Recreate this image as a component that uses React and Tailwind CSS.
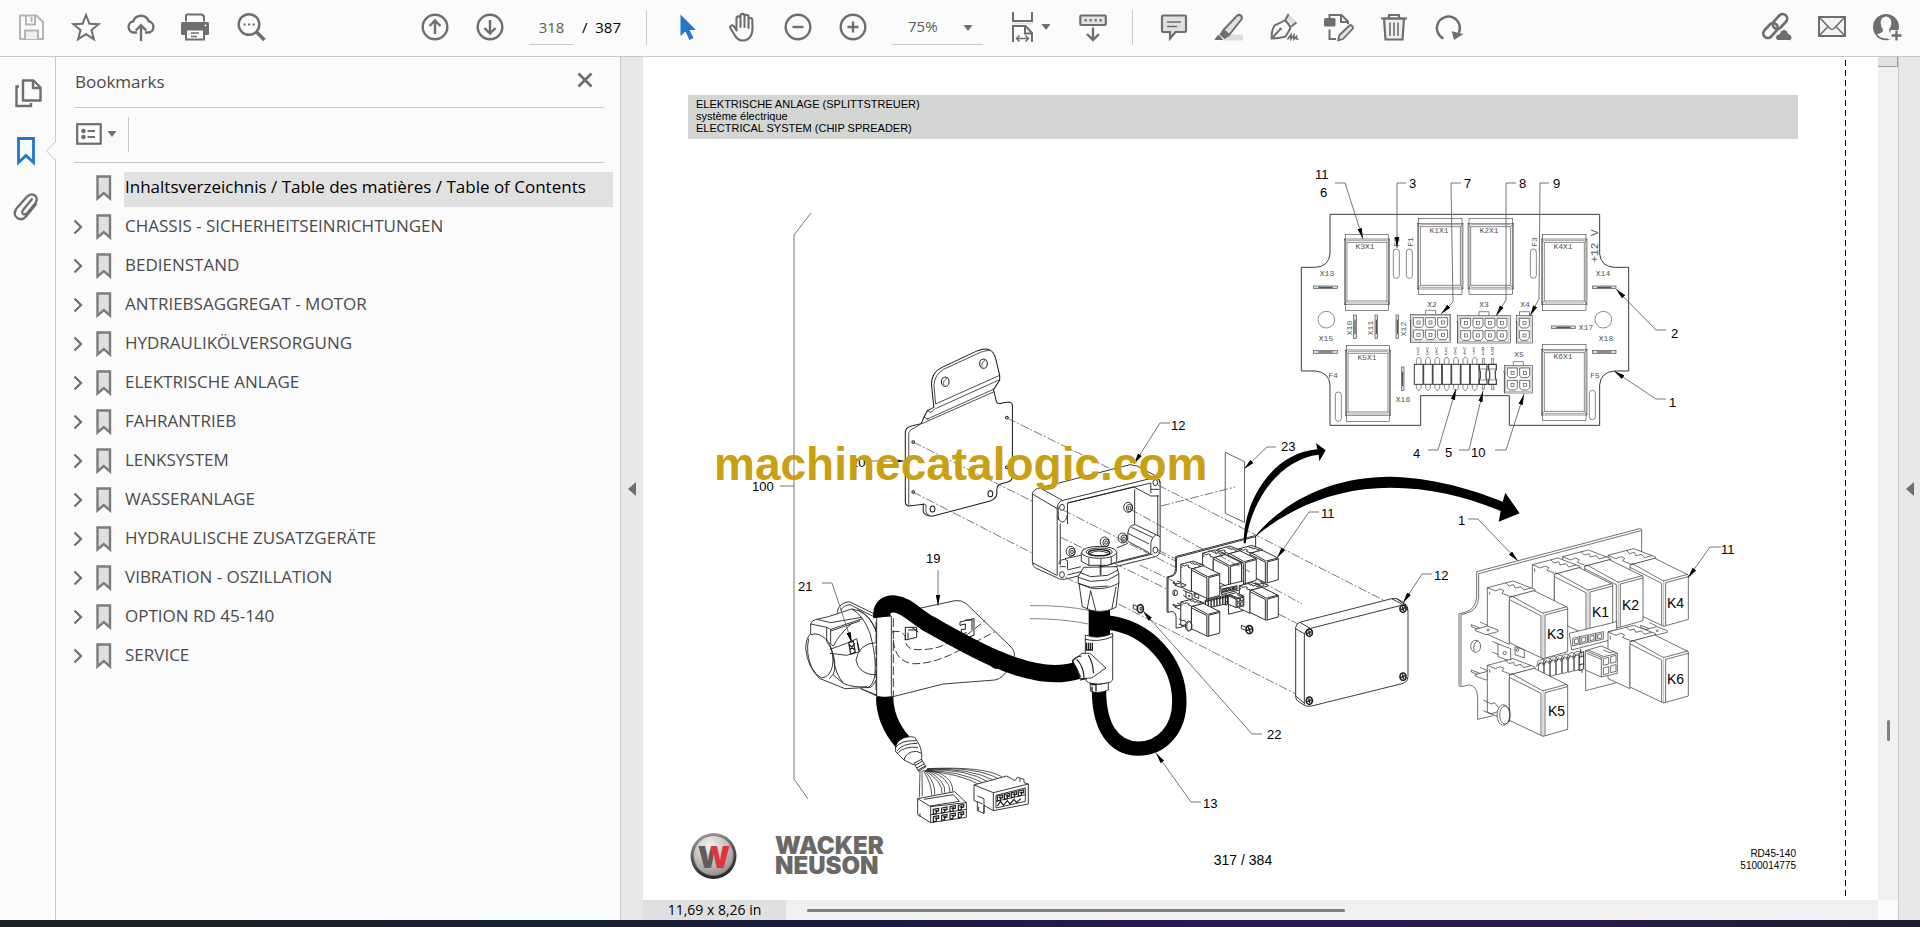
import { useState } from 'react';

const bookmarks = [
  'Inhaltsverzeichnis / Table des matières / Table of Contents',
  'CHASSIS - SICHERHEITSEINRICHTUNGEN',
  'BEDIENSTAND',
  'ANTRIEBSAGGREGAT - MOTOR',
  'HYDRAULIKÖLVERSORGUNG',
  'ELEKTRISCHE ANLAGE',
  'FAHRANTRIEB',
  'LENKSYSTEM',
  'WASSERANLAGE',
  'HYDRAULISCHE ZUSATZGERÄTE',
  'VIBRATION - OSZILLATION',
  'OPTION RD 45-140',
  'SERVICE',
];

/* ---------- icons ---------- */

const Icon = ({ children, className = 'text-[#6e6e6e]', sw = 2.4 }) => (
  <svg className={`w-[30px] h-[30px] shrink-0 ${className}`} viewBox="0 0 30 30" fill="none" stroke="currentColor" strokeWidth={sw}>
    {children}
  </svg>
);

const SaveIcon = () => (
  <Icon className="text-[#b4b4b4]" sw={2}>
    <path d="M4 3.5h16.500l6.500 6.500v17H4z" strokeLinejoin="round" />
    <path d="M10 3.500v9h9v-9M15.500 5v5" />
    <path d="M9 27v-8.500h13V27" fill="#f0f0f0" />
  </Icon>
);
const StarIcon = () => (
  <Icon sw={2}>
    <path d="M15 3l3.400 8.700 9.300.500-7.200 5.900 2.400 9.100L15 22.100l-7.900 5.100 2.400-9.100-7.200-5.900 9.300-.5z" />
  </Icon>
);
const CloudIcon = () => (
  <Icon>
    <path d="M11 20.500H7.800a5.600 5.600 0 0 1-.6-11.100 8.200 8.200 0 0 1 15.600 0 5.600 5.600 0 0 1-.6 11.100H19" />
    <path d="M15 29V13.500M9.800 18.500l5.200-5.200 5.200 5.200" />
  </Icon>
);
const PrintIcon = () => (
  <Icon sw={2}>
    <path d="M1.500 10h25q1.500 0 1.500 1.500V22q0 1-1 1H1q-1 0-1-1V11.500Q0 10 1.500 10z" fill="currentColor" stroke="none" />
    <path d="M5 9.500v-6q0-1 1-1h15l2 2v5" fill="#fbfbfb" />
    <path d="M5 17.500h18v10H5z" fill="#fbfbfb" />
    <path d="M10 21h8M10 24.500h6" strokeWidth="1.500" />
    <circle cx="24.500" cy="13.500" r="1" fill="#fbfbfb" stroke="none" />
  </Icon>
);
const SearchIcon = () => (
  <Icon>
    <circle cx="13" cy="12.500" r="10.300" />
    <path d="M20.500 20l8 8" strokeWidth="3.600" />
    <path d="M7.500 12.500h2.200M12 12.500h2.200M16.500 12.500h2.200" strokeWidth="2" />
  </Icon>
);
const UpIcon = () => (
  <Icon>
    <circle cx="15" cy="15" r="12.300" />
    <path d="M15 22V9M9.500 14L15 8.500l5.500 5.500" />
  </Icon>
);
const DownIcon = () => (
  <Icon>
    <circle cx="15" cy="15" r="12.300" />
    <path d="M15 8v13M9.500 16l5.500 5.500 5.500-5.500" />
  </Icon>
);
const ArrowIcon = () => (
  <Icon className="text-[#2277cc]">
    <path d="M7.500 2.500v21.500l5-4.500 4 8.500 4-2-4-8h6.500z" fill="currentColor" stroke="none" />
  </Icon>
);
const HandIcon = () => (
  <Icon sw={2.1}>
    <path
      d="M8.500 18.500V6.500c0-2.800 4-2.800 4 0v8.500V4c0-2.800 4-2.800 4 0v11V4.800c0-2.800 4-2.800 4 0V16V8c0-2.700 3.800-2.700 3.800 0 0 5 1.200 11-1.300 15.500-2.200 4.200-5.500 5-8.500 5-4.500 0-6.500-2.500-8.500-6.500L2.500 16.500c-1.300-2.700 2-4.300 3.700-1.800l2.800 4.500"
      strokeLinejoin="round"
    />
  </Icon>
);
const MinusIcon = () => (
  <Icon>
    <circle cx="15" cy="15" r="12.300" />
    <path d="M9.500 15h11" />
  </Icon>
);
const PlusIcon = () => (
  <Icon>
    <circle cx="15" cy="15" r="12.300" />
    <path d="M9.500 15h11M15 9.500v11" />
  </Icon>
);
const FitIcon = () => (
  <Icon sw={2}>
    <path d="M6 0v9h19V0" />
    <path d="M6 11.500h20" stroke="#dddddd" strokeWidth="1.500" />
    <path d="M6 30V14h12.500l6.500 7v9M18 14v7.500h7" />
    <path d="M9.500 26.500h12M12.500 23.500l-3 3 3 3M18.500 23.500l3 3-3 3" strokeWidth="1.500" />
  </Icon>
);
const KeyboardIcon = () => (
  <Icon>
    <rect x="2.300" y="3.500" width="25.500" height="9.500" rx="1" fill="#e4e4e4" strokeWidth="2.200" />
    <path d="M6.500 8.300h2.200M11.500 8.300h2.200M16.500 8.300h2.200M21.500 8.300h2.200" />
    <path d="M15 15.500v12M9 22l6 6 6-6" />
  </Icon>
);
const CommentIcon = () => (
  <Icon sw={2.2}>
    <path d="M4 3.500h22q1 0 1 1v14.500q0 1-1 1H16.500L11 26.500V20H4q-1 0-1-1V4.500q0-1 1-1z" fill="#e0e0e0" />
    <path d="M8 10h14M8 14.500h10" strokeWidth="1.500" />
  </Icon>
);
const HighlightIcon = () => (
  <Icon sw={2}>
    <path d="M13 22.500h16v6H8z" fill="#dedede" stroke="none" />
    <path d="M9.500 18L23 3.800q2.200-1.800 4 0t0 4.200L15 23z" fill="#e0e0e0" />
    <path d="M8.500 18.500l6 5.500-4 2.500-4.500-4zM4.500 23l4 4.500H1z" fill="currentColor" strokeWidth="1" />
  </Icon>
);
const SignIcon = () => (
  <Icon sw={2}>
    <path d="M17.500 6l2.500-3.500 8 7.500-4 3.500z" fill="#dedede" stroke="none" />
    <path d="M16.500 8l3-6M22 14.500l5.500-4" />
    <path d="M2.500 26.500q0-8 3-13Q11 11 15.500 8.500q4 2 6 7.500-2 4-5 8.500-6 2-14 2zM2.500 26.500l8-8.500" strokeLinejoin="round" />
    <circle cx="11.500" cy="17" r="1.500" fill="currentColor" stroke="none" />
    <path d="M18.500 27.500l3.500-5v4.500l3-4v4l2.500-2.500v2.500h2" strokeWidth="1.600" />
  </Icon>
);
const EditIcon = () => (
  <Icon sw={2}>
    <rect x="0" y="6" width="11.500" height="8.500" rx="1.500" fill="currentColor" stroke="none" />
    <path d="M5.500 6V3h12l6.500 6.500V12M17 3v7h7M5.500 17.500v9.500H12" />
    <path d="M14 28.500l1.500-5.500L26 13q3 .500 3 3.500L19 27z" fill="#e0e0e0" strokeLinejoin="round" strokeWidth="1.800" />
  </Icon>
);
const TrashIcon = () => (
  <Icon sw={2.2}>
    <path d="M5 6.500h20L23.500 27.500h-17z" fill="#f0f0f0" />
    <path d="M2 6.500h26M10 6V3h10v3" />
    <path d="M11 10.500v13.500M15 10.500v13.500M19 10.500v13.500" strokeWidth="1.600" />
  </Icon>
);
const RotateIcon = () => (
  <Icon>
    <path d="M9.500 26.500A11.500 11.500 0 1 1 24.800 21" />
    <path d="M17.700 19.200L29.500 22 20 28z" fill="currentColor" stroke="none" />
  </Icon>
);
const LinkIcon = () => (
  <Icon sw={2.7}>
    <rect x="-8.500" y="-4.500" width="17" height="9" rx="4.500" transform="translate(18 9.500) rotate(-48)" />
    <rect x="-8.500" y="-4.500" width="17" height="9" rx="4.500" transform="translate(8.500 18.500) rotate(-48)" />
    <path d="M16 28.500q-3-.5-2.500-3.500t3.800-3q1.500-5 5-4.500t4.200 4.200q3.500.8 3.500 4t-2.500 2.800z" fill="currentColor" stroke="#fbfbfb" strokeWidth="1" />
  </Icon>
);
const MailIcon = () => (
  <Icon sw={2}>
    <rect x="2" y="5" width="26" height="19" fill="#f4f4f4" />
    <path d="M2.500 5.500l10.500 11q2 1.600 4 0l10.500-11M2.500 23.500l8.500-9M27.500 23.500l-8.500-9" strokeWidth="1.600" />
  </Icon>
);
const UserIcon = () => (
  <Icon sw={2.4}>
    <circle cx="14" cy="15" r="13" fill="currentColor" stroke="none" />
    <path d="M14 4.500q5.500.5 5.300 7-.3 4-2.300 6l.5 2.500 4.500 3-2 4h-12l-3-4.500 5.500-2.500.500-2.500q-2-2-2.300-6Q8.500 5 14 4.500z" fill="#fbfbfb" stroke="none" />
    <path d="M5 23.500q4 4.500 11 3.800" strokeWidth="1.800" />
    <path d="M18.500 18H30v12H18.500z" fill="#fbfbfb" stroke="none" />
    <path d="M24.500 18.500v10M19.500 23.500h10" />
  </Icon>
);
const PagesIcon = () => (
  <Icon>
    <path d="M6 8.500H3.500v19.500h14.500v-3" />
    <path d="M10 2.500h10.500l7 7v13H10z" strokeLinejoin="round" />
    <path d="M20 3v7h7" />
  </Icon>
);
const ClipIcon = () => (
  <Icon sw={2.3}>
    <path d="M21.500 6.500l-9.500 11.500q-1.800 3 .5 4.200 2 .8 3.800-1.300l8.200-10q3-4.800-.8-7.600-4-2.500-7.800 1.500L5.500 16.500q-4 6 .8 9.500 4.800 3 8.700-1.500l10.500-13" />
  </Icon>
);
const MarkIcon = () => (
  <svg className="w-[16px] h-[26px] shrink-0" viewBox="0 0 16 26">
    <path d="M1.500 1.500h12.500v22L7.800 18 1.500 23.500z" fill="#e0e0e0" stroke="#7c7c7c" strokeWidth="2.400" />
  </svg>
);
const Caret = ({ className = '' }) => (
  <svg className={`w-[10px] h-[6px] ${className}`} viewBox="0 0 10 6">
    <path d="M.5 0h9L5 6z" fill="#6e6e6e" />
  </svg>
);

const ToolButton = ({ label, children }) => (
  <button type="button" aria-label={label} className="w-[55px] h-10 flex items-center justify-center shrink-0 cursor-pointer">
    {children}
  </button>
);
const Divider = () => <div className="w-px h-[35px] bg-[#c8c8c8] shrink-0" />;

/* ---------- technical drawing ---------- */

const Note = ({ x, y, size = 13, children }) => (
  <text x={x} y={y} fontSize={size} fill="#000" fontFamily="Liberation Sans, sans-serif">{children}</text>
);
const Label = ({ x, y, size = 8, turn, children }) => (
  <text
    x={x}
    y={y}
    fontSize={size}
    fill="#555"
    textAnchor="middle"
    fontFamily="Liberation Mono, monospace"
    transform={turn ? `rotate(-90 ${x} ${y})` : undefined}
  >
    {children}
  </text>
);

// callouts: text, x, y (baseline)
const notes = [
  ['11', 1315, 179], ['6', 1320, 197], ['3', 1409, 188], ['7', 1464, 188], ['8', 1519, 188], ['9', 1553, 188],
  ['2', 1671, 338], ['1', 1669, 407], ['4', 1413, 458], ['5', 1445, 457], ['10', 1471, 457],
  ['23', 1281, 451], ['11', 1321, 518], ['12', 1434, 580], ['1', 1458, 525], ['11', 1721, 554],
  ['12', 1171, 430], ['19', 926, 563], ['21', 798, 591], ['20', 851, 467], ['100', 752, 491],
  ['22', 1267, 739], ['13', 1203, 808],
];

const leaders = [
  '1335,183 1345,183 1363,239', '1406,183 1397,183 1397,248', '1461,183 1451,183 1453,302 1441,314',
  '1516,183 1506,183 1506,300 1496,316', '1549,183 1540,183 1539,299 1530,316', '1666,330 1656,330 1616,289',
  '1666,399 1656,399 1614,371', '1428,450 1438,450 1456,389', '1459,450 1469,450 1483,391',
  '1495,450 1506,450 1524,394', '1319,512 1309,512 1277,558', '1432,574 1422,574 1403,603',
  '1468,519 1478,519 1518,561', '1721,547 1710,547 1688,578', '1170,423 1160,423 1134,464',
  '1276,447 1267,447 1244,469', '938,570 938,606', '822,583 832,583 852,643', '871,461 904,461',
  '1262,734 1252,734 1143,611', '1201,802 1191,802 1156,753',
];

const boardLabels = [
  ['K3X1', 255, 296], ['K1X1', 478, 249], ['K2X1', 627, 249], ['K4X1', 848, 296], ['K5X1', 260, 629], ['K6X1', 848, 627],
  ['X13', 141, 379], ['X14', 969, 379], ['X15', 137, 573], ['X18', 978, 573], ['X2', 455, 470], ['X3', 613, 470],
  ['X4', 735, 470], ['X5', 718, 620], ['F4', 158, 684], ['F5', 945, 684], ['X16', 370, 756], ['X17', 918, 540],
  ['X10', 215, 533, true], ['X11', 279, 533, true], ['X12', 378, 536, true], ['F2', 358, 275, true],
  ['F1', 400, 275, true], ['F3', 770, 275, true],
];

const PlanRelay = ({ x, y }) => (
  <g>
    <rect x={x} y={y} width="130" height="228" />
    <rect x={x - 3} y={y + 14} width="136" height="197" strokeWidth="1.600" />
    <path d={`M${x + 5} ${y + 24}h120v176h-120zM${x - 3} ${y + 14}l8 10M${x + 133} ${y + 14}l-8 10M${x - 3} ${y + 211}l8-11M${x + 133} ${y + 211}l-8-11`} />
    <path d={`M${x + 5} ${y + 18}h120M${x + 5} ${y + 206}h120`} strokeWidth="1.400" />
  </g>
);

const Plug = ({ x, y, w, h, xs, ys }) => (
  <g>
    <rect x={x} y={y} width={w} height={h} />
    <rect x={x + 4} y={y + 4} width={w - 8} height={h - 8} strokeWidth="1" />
    <path d={`M${x + w / 2 - 15} ${y}v-12h30v12M${x - 4} ${y + 18}h4v${h - 18}`} />
    {xs.map((cx) =>
      ys.map((cy) => (
        <g key={`${cx}-${cy}`}>
          <path d={`M${cx - 15} ${cy - 14}h30v22l-6 7h-18l-6-7z`} strokeWidth="2.200" />
          <rect x={cx - 4} y={cy - 4} width="9" height="9" />
        </g>
      ))
    )}
  </g>
);

const BoardPlan = () => (
  <g transform="translate(1280 150) scale(.33333)" fill="none" stroke="#3a3a3a" strokeWidth="1.800">
    <path
      d="M150 193H959V312Q963 350 1003 352H1046V663H1003Q961 667 959 705V826H688V737H422V826H150V705Q148 667 106 663H64V352H106Q146 350 150 312Z"
      strokeWidth="3"
    />
    <PlanRelay x={196} y={253} />
    <PlanRelay x={416} y={206} />
    <PlanRelay x={567} y={206} />
    <PlanRelay x={788} y={253} />
    <PlanRelay x={199} y={586} />
    <PlanRelay x={788} y={584} />
    {[[340, 297], [379, 297], [751, 297], [166, 726], [928, 721]].map(([x, y]) => (
      <rect key={`${x}-${y}`} x={x} y={y} width="18" height="88" rx="9" />
    ))}
    <circle cx="139" cy="509" r="25" />
    <circle cx="970" cy="509" r="25" />
    {[[101, 408], [937, 408], [101, 602], [937, 602], [815, 528]].map(([x, y]) => (
      <g key={`${x}-${y}`}>
        <rect x={x} y={y} width="71" height="8" fill="#ddd" />
        <path d={`M${x + 14} ${y + 4}h43`} strokeWidth="3" />
      </g>
    ))}
    {[[221, 495], [285, 495], [348, 495], [364, 651]].map(([x, y]) => (
      <g key={`${x}-${y}`}>
        <rect x={x} y={y} width="8" height="71" fill="#ddd" />
        <path d={`M${x + 4} ${y + 14}v43`} strokeWidth="3" />
      </g>
    ))}
    <Plug x={392} y={493} w={120} h={84} xs={[415, 451, 488]} ys={[517, 554]} />
    <Plug x={533} y={497} w={158} h={82} xs={[557, 594, 630, 666]} ys={[519, 556]} />
    <Plug x={710} y={497} w={47} h={82} xs={[733]} ys={[519, 556]} />
    <Plug x={673} y={647} w={84} h={82} xs={[697, 734]} ys={[668, 705]} />
    {[0, 1, 2, 3, 4, 5, 6].map((i) => (
      <g key={i}>
        <rect x={403 + i * 28} y="643" width="26" height="60" strokeWidth="3" />
        <path d={`M${409 + i * 28} 643v-15l5-6h4l5 6v15M${409 + i * 28} 703v12l5 6h4l5-6v-12`} />
      </g>
    ))}
    {[598, 626].map((x) => (
      <g key={x}>
        <path d={`M${x} 643h23v16l-3 5v20l3 5v14h-23v-14l3-5v-20l-3-5z`} strokeWidth="3.500" />
        <path d={`M${x} 657h23M${x} 690h23M${x + 9} 643v-18h6v18M${x + 9} 703v16h6v-16`} />
      </g>
    ))}
  </g>
);

// x, y: top of the front vertical edge of the relay cap
const IsoRelay = ({ x, y }) => (
  <g transform={`translate(${x} ${y})`} fill="#fff" strokeLinejoin="round">
    <path d="M-167-82L-90-102-24-77V-60L-101-40V88L-167 58Z" />
    <path d="M-167-82l24 10 14-6 12 5-6 8 22 8M-112-97l10 10 14-4 4 10 18-4 8 10 22-6M-160-70v10M-101-53l77-20" fill="none" />
    <path d="M-101-53L-27-73 74-23V110L0 131-101 83Z" />
    <path d="M-101-53Q-100-58-92-56L-4-7Q0-5 6-7L72-25M-6 2V128M6 0V128M-101-46L-6 2M6 0L74-18" fill="none" />
    <path d="M0-7V131" fill="none" strokeWidth="1" />
  </g>
);

const Spade = ({ x, y }) => (
  <g transform={`translate(${x} ${y})`} fill="#fff">
    <path d="M-48-14l30 12M-22-22l22 10M-48-14v6l24 10" />
    <path d="M-36 0L0-10 32 2v5L-4 16-36 4z" />
    <circle cx="2" cy="2" r="3" />
  </g>
);

const IsoBoard = ({ transform, strokeWidth }) => (
  <g transform={transform} fill="none" stroke="#2a2a2a" strokeWidth={strokeWidth}>
    <path d="M650 455L1139 326 1145 328V600L1070 790 977 812 700 887 653 898V830Q650 792 618 795L597 797V581L618 577Q650 568 650 530Z" fill="#fff" stroke="none" />
    <path d="M1145 400V328L1139 326 650 455V530Q648 568 615 577L597 581V797L602 800 628 795Q650 796 653 830V898L700 887M656 461L1143 332M656 461V533Q654 572 618 580L603 584V797M977 745V812L1070 788" />
    <ellipse cx="647" cy="679" rx="15" ry="18" />
    <path d="M654 662q-16 6-12 32" />
    <circle cx="856" cy="545" r="25" />
    <IsoRelay x={1211} y={488} />
    <IsoRelay x={1075} y={492} />
    <IsoRelay x={984} y={516} />
    <path d="M928 640L1070 605V655L935 690Z" fill="#fff" />
    {[938, 960, 985, 1008, 1046].map((x, i) => (
      <path key={x} d={`M${x} ${655 - i * 5}l22-5v22l-22 6zM${x + 5} ${659 - i * 5}l12-3v13l-12 3z`} fill="#fff" />
    ))}
    <Spade x={1190} y={630} />
    <IsoRelay x={1211} y={718} />
    <IsoRelay x={849} y={585} />
    <Spade x={682} y={628} />
    <Spade x={682} y={764} />
    <path d="M697 664l18 8M697 696l18 8M714 672l38 14v38l-38-14zM765 680l28 10v24l-28-10z" fill="#fff" />
    <circle cx="734" cy="699" r="5" />
    <circle cx="772" cy="690" r="4" />
    {[0, 1, 2, 3, 4, 5, 6].map((i) => (
      <g key={i}>
        <path d={`M${835 + i * 18} ${732 - i * 4}l16-4v44l-16 5z`} fill="#fff" />
        <path d={`M${830 + i * 18} ${740 - i * 4}q2-20 14-22t14 14M${836 + i * 18} ${738 - i * 4}q2-12 8-14`} />
      </g>
    ))}
    <path d="M957 700l14-5v52l-14 5zM957 712l14-4M957 735l14-4M962 697v-10M966 750v8" strokeWidth={strokeWidth + 1} />
    <path d="M976 692L1024 678 1072 700V760L1024 771 976 750Z" fill="#fff" />
    <path d="M976 692l48 20 48-12M1024 712v59M984 690l44 18M1030 716l16-4v20l-16 4zM1052 710l16-4v20l-16 4zM1030 744l16-4v20l-16 4zM1052 738l16-4v20l-16 4zM980 700l44 18M1030 690l20 8 14-4" />
    <IsoRelay x={849} y={818} />
    <path d="M670 840l24 12 10-4 12 16M670 872l22 10 24-8" />
    <ellipse cx="730" cy="885" rx="19" ry="31" fill="#fff" />
    <ellipse cx="735" cy="885" rx="16" ry="27" />
  </g>
);

const Bracket = () => (
  <g transform="translate(760 320) scale(.34436 .33333)" fill="none" stroke="#1c1c1c" strokeWidth="3">
    <path d="M505 262L498 195Q497 158 527 143L632 92Q675 74 685 118L696 166V180L678 209 687 246Q690 252 700 250L722 246Q734 246 733 262V470Q732 482 722 485L698 492Q686 498 688 515 690 535 668 543L500 589Q478 588 474 575V553L432 558Q422 556 422 546V335Q424 322 440 318L468 311 476 292 486 272Z" />
    <path d="M510 252L696 166M512 265L694 180M484 298L680 207M470 311L680 215M510 252L505 195Q508 162 533 148L640 97Q660 90 668 92M432 556V340Q434 328 448 324L468 311M476 290l14 10M486 272l10 5 14-12M482 575v-20l-8-4M482 575q2 10 12 12" strokeWidth="2.300" />
    <ellipse cx="538" cy="185" rx="11" ry="14" />
    <path d="M544 174q-14 6-10 22M655 120q-14 6-10 22" strokeWidth="2" />
    <ellipse cx="649" cy="131" rx="11" ry="14" />
    <circle cx="445" cy="366" r="4" />
    <circle cx="445" cy="516" r="4" />
    <circle cx="717" cy="293" r="4" />
    <circle cx="717" cy="442" r="4" />
    <ellipse cx="501" cy="567" rx="7" ry="9" />
    <ellipse cx="669" cy="521" rx="7" ry="9" />
    <path d="M1351 397L1407 425V607L1351 580Z" strokeWidth="2" />
  </g>
);

const Housing = () => (
  <g transform="translate(760 320) scale(.34436 .33333)" fill="none" stroke="#1c1c1c" strokeWidth="2.600">
    <path d="M791 520Q795 507 815 503L1075 434 1095 438 1150 468Q1163 476 1162 495V690Q1162 705 1148 710L885 778Q868 780 860 772L800 744Q791 739 791 725Z" fill="#fff" />
    <path d="M815 505L878 541M791 522L863 566M791 728L862 766M863 766V562Q865 545 880 541L1140 474Q1160 472 1162 490M872 610V735M893 612V549L1084 501" />
    <path d="M893 549L1135 489 M1084 500L1135 528H1158M1088 508V612M1135 489V520M1155 525V648M866 590Q868 605 878 606 890 604 892 585M866 560V600M1135 508H1160" />
    <path d="M868 733Q870 718 885 718L893 722V748M870 740H888M893 765L1140 702M893 750L932 740M885 716L932 706M1036 684L1068 670" />
    <path d="M1068 662V640Q1072 612 1090 614L1150 644M1078 622L1140 652M1068 640L1130 672M1068 664L1130 698M1135 700V668Q1138 650 1150 644L1162 650M1040 725L1135 700" />
    {[[877, 562], [1148, 488], [877, 764], [1148, 690]].map(([x, y]) => (
      <ellipse key={`${x}-${y}`} cx={x} cy={y} rx="7" ry="9" />
    ))}
    {[[1069, 562], [1053, 654], [1001, 666], [902, 694]].map(([x, y]) => (
      <g key={`${x}-${y}`}>
        <ellipse cx={x} cy={y} rx="13" ry="15" />
        <ellipse cx={x + 4} cy={y + 2} rx="9" ry="11" />
        <ellipse cx={x + 4} cy={y + 2} rx="4" ry="5" />
      </g>
    ))}
  </g>
);

const Gland = () => (
  <g transform="translate(760 320) scale(.34436 .33333)" fill="#fff" stroke="#1c1c1c" strokeWidth="2.600">
    <path d="M926 788L936 860Q985 888 1034 862L1042 788Z" />
    <path d="M960 812L950 868M960 812L975 872M1034 800L1022 866" fill="none" />
    <path d="M940 742L1036 740 1042 762V790Q1000 812 960 804L924 790V770Z" />
    <path d="M924 772L960 784 1010 780 1042 762M930 758L960 770 1010 766 1040 750M924 790L960 802 1010 798M988 735V765" fill="none" />
    <path d="M933 697V724L955 736H1008L1036 726V697Z" />
    <path d="M955 714V736M990 716V765M1020 708V732" fill="none" />
    <ellipse cx="985" cy="697" rx="51" ry="18" />
    <ellipse cx="985" cy="696" rx="38" ry="12" />
    <ellipse cx="985" cy="698" rx="31" ry="9" strokeWidth="4" />
    <path d="M958 700q26-14 54 0" fill="none" />
  </g>
);

const Cover = () => (
  <g transform="translate(1260 420) scale(.33333)" fill="none" stroke="#1c1c1c" strokeWidth="2.600">
    <path d="M107 622Q110 609 122 606L395 536Q410 533 422 542L434 550Q445 558 444 575V770Q443 786 430 790L155 858Q142 861 133 856L112 842Q107 838 107 828Z" fill="#fff" />
    <path d="M133 854V648Q134 629 152 625L420 557Q440 553 444 572M107 626L134 642M120 607L150 625M395 536L425 552M107 828L134 850M410 536L440 558" />
    {[[148, 638], [429, 566], [148, 842], [429, 770]].map(([x, y]) => (
      <g key={`${x}-${y}`}>
        <ellipse cx={x} cy={y} rx="9" ry="11" strokeWidth="5" />
        <path d={`M${x - 6} ${y + 3}l12-6M${x - 2} ${y - 7}l4 14`} strokeWidth="4" />
      </g>
    ))}
  </g>
);

const Pins = ({ x, y, n, dx, dy }) =>
  Array.from({ length: n }, (_, i) => (
    <path key={i} d={`M${x + i * dx} ${y + i * dy}l16-3v8l-7 2v6l-9 2zM${x + 4 + i * dx} ${y + 5 + i * dy}l8-2`} strokeWidth="3.500" />
  ));

const Harness = () => (
  <g transform="translate(780 540) scale(.33333)" fill="none" stroke="#1c1c1c" strokeWidth="2.600">
    {/* mounting plate */}
    <path d="M395 210L525 182Q545 179 560 192L690 318Q706 333 703 350M697 366Q672 417 645 420L490 432 335 471 290 468 243 446" />
    <path d="M335 276Q365 268 376 290 372 322 400 328 440 332 480 320L560 285 615 242M340 300Q345 366 400 371 460 373 540 330L645 275" strokeDasharray="24 9" />
    <path d="M376 262h34v30l-34 8zM384 270h26M384 278v18M395 262l20 14M540 246l42-10v50l-20 6M540 246v10l16-4v16h-12v14l16-4M556 240h20v30" strokeWidth="3" />
    <path d="M632 372q8 14 24 12" strokeWidth="5" />

    {/* socket */}
    <path d="M172 214Q178 188 208 185L292 226V466L243 446Z" fill="#fff" />
    <path d="M182 212Q190 196 210 194L286 232" />
    <path d="M92 252Q95 240 110 238L145 230 215 207Q262 212 285 265 303 320 300 370 298 420 272 442L195 446 118 415Q82 380 77 325 79 290 92 282Z" fill="#fff" />
    {/* flange rings */}
    <path d="M215 207Q250 225 270 280 290 350 285 405 280 435 262 444M232 209Q275 225 295 290 306 350 296 405" />
    {/* lid */}
    <path d="M92 252L140 262 152 268V312L160 318M140 262V304M110 238L152 248 245 232M152 268L248 236M152 273L240 243" />
    <path d="M92 284Q118 274 146 306 162 340 158 375 152 410 125 414M86 296Q76 340 96 385 110 408 125 414M140 304Q168 340 164 390 162 405 148 416" />
    <path d="M160 318Q176 285 215 250M150 328L200 310 230 296 239 335 200 346 150 340M160 352Q165 400 190 430 220 444 262 440M160 405L190 430M290 308Q236 310 228 360 236 405 290 405" />
    <path d="M206 308l14-5 6 34-14 5zM208 314l16 16M224 310l-14 20M232 306l4 26" strokeWidth="3.500" />
    <path d="M292 270Q318 275 318 305 316 335 296 340M300 280q8 20 0 50" />
    <path d="M290 228H334V470Q312 478 290 468Z" fill="#fff" />
    <path d="M288 245V465M340 235V470" strokeDasharray="26 10" />

    {/* cables */}
    <path d="M750 197Q850 195 930 212M750 236Q850 236 925 252" strokeWidth="1.600" />
    <g stroke="#000">
      <path d="M306 232C302 198 325 190 345 192 375 195 400 222 440 248 545 306 700 401 825 401 855 401 875 397 905 388" strokeWidth="52" />
      <path d="M985 248C1100 262 1198 360 1198 485 1198 568 1145 626 1075 626 1000 626 957 560 957 450" strokeWidth="43" />
      <path d="M958 208V300" strokeWidth="64" />
      <path d="M314 470C314 520 335 568 368 606" strokeWidth="52" />
    </g>

    {/* tee */}
    <path d="M916 296Q955 306 998 286V420Q990 432 960 432 930 434 918 422V400L916 340Z" fill="#fff" />
    <path d="M916 285Q955 300 998 280V290Q955 308 916 298Z" fill="#fff" />
    <path d="M978 384L930 340H905L876 366Q892 378 900 416L935 414Z" fill="#fff" />
    <path d="M876 364Q884 350 905 348M890 358Q912 380 912 416M925 345Q940 370 940 400M900 420l20-4M878 362l24 50" strokeWidth="3.500" />
    <path d="M919 308v22h18v-22M925 308v22M931 308v22" strokeWidth="4" />
    <path d="M930 430Q955 438 985 428V450Q958 462 932 454Z" fill="#fff" />
    <path d="M932 434h16v20M936 440v12" strokeWidth="4" />

    {/* cable end and wires */}
    <path d="M346 634Q345 612 360 600 380 586 404 592L412 604Q428 628 425 660L400 674 372 660Z" fill="#fff" />
    <path d="M346 624Q360 600 410 602M350 634Q366 610 412 610M352 640Q372 618 414 622M372 660Q376 642 394 636T424 640" />
    <path d="M402 670l22-12 14 22-22 14z" fill="#fff" />
    <path d="M405 676l22-12M410 684l22-12M414 690l22-12" />
    <path d="M420 692L418 772M426 692L427 768M430 692Q455 730 455 766M434 692Q468 730 464 764M436 692Q488 725 486 760M438 690Q500 722 494 758M440 690Q512 712 510 756M442 688Q520 705 518 754" strokeWidth="2.200" />
    <path d="M430 692Q540 700 600 735M436 692Q540 692 612 730M440 690Q560 686 625 726M442 688Q570 684 640 720M444 687Q590 680 655 716M440 686Q610 678 665 710" strokeWidth="2.200" />

    {/* plugs */}
    <path d="M413 776L524 755 559 788V832L452 848 413 824Z" fill="#fff" />
    <path d="M413 776L452 800V848M452 800L559 788M432 778L520 764 538 784 450 798M452 824L559 808M420 820v10" />
    <Pins x={460} y={808} n={4} dx={25} dy={-4} />
    <Pins x={460} y={830} n={4} dx={25} dy={-4} />
    <path d="M582 735L680 708 705 722 712 712 732 718V728L745 732V792L640 812 612 796V820L592 812V785L582 782Z" fill="#fff" />
    <path d="M582 735L640 758V812M640 758L745 732M592 768L612 776V820M592 785L608 792M648 766L736 744V784L648 804ZM596 800v12M648 784L736 764M720 716v10" />
    <Pins x={652} y={768} n={4} dx={21} dy={-5} />
    <path d="M652 798l10-14 8 12 12-14 8 10 12-14 8 10 12-12" strokeWidth="3.500" />

    {/* screws */}
    <path d="M1060 194l14 6v12l-14-6zM1384 256l16 6v10l-16-6z" fill="#fff" />
    <ellipse cx="1081" cy="206" rx="9" ry="12" strokeWidth="5" fill="#fff" />
    <ellipse cx="1083" cy="206" rx="3" ry="5" strokeWidth="3" />
    <ellipse cx="1408" cy="269" rx="10" ry="12" strokeWidth="5" fill="#fff" />
    <path d="M1400 272l16-6M1405 260l6 18" strokeWidth="4" />
  </g>
);

const Drawing = () => (
  <svg className="block w-full" viewBox="688 139 1110 691" role="img" aria-label="Electrical system (chip spreader)">
    <defs>
      <marker id="tip" markerUnits="userSpaceOnUse" markerWidth="12" markerHeight="6" refX="11" refY="3" orient="auto">
        <path d="M0 .8L11 3 0 5.200Z" fill="#000" />
      </marker>
    </defs>
    <path d="M811 213L794 235V779L808 799M780 486H794" fill="none" stroke="#777" />

    <BoardPlan />
    {boardLabels.map(([t, x, y, turn]) => (
      <Label key={t} x={Math.round(1280 + x / 3)} y={Math.round(150 + y / 3)} turn={turn}>{t}</Label>
    ))}
    <Label x={1598} y={246} size={11} turn>+12 V</Label>
    {['V1', 'V3', 'V5', 'V2', 'V6', 'V4', 'V7', 'R1', 'R2'].map((t, i) => (
      <g key={t}>
        <Label x={1418 + i * 9.3} y={351} size={5}>{t[0]}</Label>
        <Label x={1418 + i * 9.3} y={355} size={5}>{t[1]}</Label>
      </g>
    ))}

    <Bracket />
    <Housing />
    <g fill="none" stroke="#555" strokeWidth=".8" strokeDasharray="9 2 2 2">
      <path d="M1007 418L1111 469M913 442L1032 501M913 492L1032 553M1158 485L1387 602M1063 510L1175 567M1060 537L1167 589M1130 509L1302 604M1158 552L1300 625M1065 577L1296 694M1161 506L1235 487M1158 550L1270 607" />
    </g>
    <Harness />
    <Gland />
    <IsoBoard transform="translate(1070.500 483) scale(.1617)" strokeWidth={6} />
    <path d="M1140 565L1175 582M1205 548L1250 572" fill="none" stroke="#555" strokeWidth=".8" strokeDasharray="9 2 2 2" />
    <Cover />
    <IsoBoard transform="translate(1260 420) scale(.33333)" strokeWidth={2} />

    <g transform="translate(1260 420) scale(.33333)" fill="#000">
      <path d="M-18 353C60 255 200 170 390 170 510 172 630 205 728 245L736 218 779 280 716 305 722 273C620 230 510 203 390 203 230 203 90 262-18 353Z" />
      <path d="M-49 370C-50 240 40 98 172 88L168 69 197 91 178 124 176 104C75 115-25 220-43 370Z" />
    </g>

    {leaders.map((p) => (
      <polyline key={p} points={p} fill="none" stroke="#666" strokeWidth=".9" markerEnd="url(#tip)" />
    ))}
    {notes.map(([t, x, y]) => (
      <Note key={`${x}-${y}`} x={x} y={y}>{t}</Note>
    ))}
    {[['K1', 1592, 617], ['K2', 1622, 610], ['K3', 1547, 639], ['K4', 1667, 608], ['K5', 1548, 716], ['K6', 1667, 684]].map(([t, x, y]) => (
      <Note key={t} x={x} y={y} size={14}>{t}</Note>
    ))}
    <text x="714" y="480" fontSize="46" fontWeight="700" fill="#c9a013" fontFamily="Liberation Sans, sans-serif">
      machinecatalogic.com
    </text>
  </svg>
);

const Logo = () => (
  <svg className="w-[47px] h-[48px]" viewBox="0 0 47 48">
    <defs>
      <radialGradient id="disc" cx=".4" cy=".25" r=".8">
        <stop offset="0" stopColor="#f4f3f1" />
        <stop offset=".6" stopColor="#bdbab6" />
        <stop offset="1" stopColor="#8f8c89" />
      </radialGradient>
      <linearGradient id="rim" x1="0" y1="0" x2=".3" y2="1">
        <stop offset="0" stopColor="#b5b2af" />
        <stop offset=".5" stopColor="#5a5755" />
        <stop offset="1" stopColor="#2c2a2c" />
      </linearGradient>
      <linearGradient id="mark" x1="0" y1=".2" x2="1" y2="0">
        <stop offset=".38" stopColor="#615d5a" />
        <stop offset=".38" stopColor="#e0343c" />
      </linearGradient>
    </defs>
    <circle cx="23.500" cy="24" r="23" fill="url(#rim)" />
    <circle cx="23.500" cy="23.500" r="20" fill="url(#disc)" stroke="#77736f" strokeWidth=".8" />
    <text x="24" y="36" textAnchor="middle" fontSize="30" fontWeight="900" fill="url(#mark)" fontFamily="Inter, sans-serif">W</text>
  </svg>
);

/* ---------- page ---------- */

const Toolbar = () => {
  const [page, setPage] = useState('318');
  const [zoom, setZoom] = useState('75%');

  return (
    <header className="h-[57px] shrink-0 flex items-center pl-[3px] pr-[6px] pb-[2px] border-b border-[#c8c8c8] bg-[#fbfbfb] text-[15px]">
      <ToolButton label="Save"><SaveIcon /></ToolButton>
      <ToolButton label="Star"><StarIcon /></ToolButton>
      <ToolButton label="Upload"><CloudIcon /></ToolButton>
      <ToolButton label="Print"><PrintIcon /></ToolButton>
      <ToolButton label="Find"><SearchIcon /></ToolButton>
      <div className="flex items-center ml-[129px]">
        <ToolButton label="Previous page"><UpIcon /></ToolButton>
        <ToolButton label="Next page"><DownIcon /></ToolButton>
        <input
          aria-label="Page number"
          value={page}
          onChange={(e) => setPage(e.target.value)}
          className="w-[45px] h-[35px] ml-3 text-center text-[#5a5a5a] border-b border-[#c8c8c8] bg-transparent outline-none"
        />
        <span className="ml-2 w-[64px] whitespace-pre">/  387</span>
      </div>
      <Divider />
      <div className="flex items-center ml-[13px]">
        <ToolButton label="Select"><ArrowIcon /></ToolButton>
        <ToolButton label="Pan"><HandIcon /></ToolButton>
        <ToolButton label="Zoom out"><MinusIcon /></ToolButton>
        <ToolButton label="Zoom in"><PlusIcon /></ToolButton>
      </div>
      <div className="relative ml-3">
        <select
          aria-label="Zoom"
          value={zoom}
          onChange={(e) => setZoom(e.target.value)}
          className="w-[91px] h-[35px] pl-4 appearance-none text-[#5a5a5a] border-b border-[#c8c8c8] bg-transparent outline-none"
        >
          <option>75%</option>
          <option>100%</option>
        </select>
        <Caret className="absolute right-[10px] top-[15px] pointer-events-none" />
      </div>
      <button type="button" aria-label="Fit width" className="ml-6 w-[58px] flex items-center gap-1 cursor-pointer">
        <FitIcon />
        <Caret />
      </button>
      <ToolButton label="Show toolbar"><KeyboardIcon /></ToolButton>
      <div className="ml-3"><Divider /></div>
      <div className="flex items-center ml-[13px]">
        <ToolButton label="Comment"><CommentIcon /></ToolButton>
        <ToolButton label="Highlight"><HighlightIcon /></ToolButton>
        <ToolButton label="Sign"><SignIcon /></ToolButton>
        <ToolButton label="Edit"><EditIcon /></ToolButton>
        <ToolButton label="Delete"><TrashIcon /></ToolButton>
        <ToolButton label="Rotate"><RotateIcon /></ToolButton>
      </div>
      <div className="flex items-center ml-auto">
        <ToolButton label="Share link"><LinkIcon /></ToolButton>
        <ToolButton label="Email"><MailIcon /></ToolButton>
        <ToolButton label="Add people"><UserIcon /></ToolButton>
      </div>
    </header>
  );
};

const Rail = () => (
  <nav className="relative w-[56px] shrink-0 border-r border-[#c8c8c8] pt-[15px]">
    <button type="button" aria-label="Pages" className="w-[55px] h-[42px] flex items-center justify-center cursor-pointer">
      <PagesIcon />
    </button>
    <button type="button" aria-label="Bookmarks" className="w-[52px] h-[74px] flex items-center justify-center cursor-pointer">
      <svg className="w-[20px] h-[30px]" viewBox="0 0 20 30">
        <path d="M2.500 2.500h15v24L10 19.500l-7.500 7z" fill="none" stroke="#2277cc" strokeWidth="2.800" />
      </svg>
    </button>
    <button type="button" aria-label="Attachments" className="w-[52px] h-[38px] flex items-center justify-center cursor-pointer">
      <ClipIcon />
    </button>
    <svg className="absolute -right-px top-[84px] w-[11px] h-[20px]" viewBox="0 0 11 20">
      <path d="M11 1L1.500 10l9.500 9z" fill="#fbfbfb" />
      <path d="M10.500 .5L1.500 10l9 9.500" fill="none" stroke="#c8c8c8" />
    </svg>
  </nav>
);

const BookmarksPanel = () => {
  const [selected, setSelected] = useState(0);

  return (
    <aside className="w-[565px] shrink-0 border-r border-[#c8c8c8] text-[#4b4b4b]">
      <div className="ml-[18px] mr-4 h-[51px] flex items-center justify-between border-b border-[#c8c8c8] pl-px pr-[11px]">
        <h2 className="text-[17px]">Bookmarks</h2>
        <button type="button" aria-label="Close" className="pb-1 cursor-pointer">
          <svg className="w-[16px] h-[16px]" viewBox="0 0 16 16">
            <path d="M1.500 1.500l13 13M14.500 1.500l-13 13" stroke="#6e6e6e" strokeWidth="2.800" />
          </svg>
        </button>
      </div>
      <div className="ml-[18px] mr-4 h-[55px] pb-[2px] flex items-center border-b border-[#c8c8c8]">
        <button type="button" aria-label="Options" className="flex items-center gap-[5px] pl-[2px] w-[54px] cursor-pointer">
          <svg className="w-[26px] h-[22px]" viewBox="0 0 26 22">
            <rect x="1.200" y="1.200" width="23.500" height="19.500" fill="#fff" stroke="#6e6e6e" strokeWidth="2.200" />
            <path d="M11.500 8h7.500M11.500 14h7.500" stroke="#6e6e6e" strokeWidth="2" />
            <circle cx="7.500" cy="8" r="2.300" fill="#6e6e6e" />
            <circle cx="7.500" cy="14" r="2.300" fill="#6e6e6e" />
          </svg>
          <Caret />
        </button>
        <Divider />
      </div>
      <ul className="pt-[5px] text-[17px]">
        {bookmarks.map((b, i) => (
          <li key={b} className="h-[39px] flex items-center pl-[16px] pr-[7px]">
            <span className="w-[24px] shrink-0">
              {i > 0 && (
                <svg className="w-[12px] h-[16px]" viewBox="0 0 12 16">
                  <path d="M2.500 1.500L9 8l-6.500 6.500" fill="none" stroke="#6e6e6e" strokeWidth="2.200" />
                </svg>
              )}
            </span>
            <MarkIcon />
            <button
              type="button"
              onClick={() => setSelected(i)}
              className={`ml-3 pl-px flex-1 h-[35px] self-end pb-[5px] text-left cursor-pointer ${selected === i ? 'bg-[#e1e1e1] text-black' : ''}`}
            >
              {b}
            </button>
          </li>
        ))}
      </ul>
    </aside>
  );
};

const Document = () => (
  <div className="flex-1 min-h-0 flex bg-white">
    <div className="flex-1 min-w-0 ml-[45px] mr-[47px] mt-[38px]">
      <div className="h-[44px] bg-[#d4d6d3] px-2 pt-[3px] text-[11px] leading-[12px] text-black">
        <p>ELEKTRISCHE ANLAGE (SPLITTSTREUER)</p>
        <p>système électrique</p>
        <p>ELECTRICAL SYSTEM (CHIP SPREADER)</p>
      </div>
      <Drawing />
      <footer className="grid grid-cols-3 items-center mt-[2px] px-[2px]">
        <div className="flex items-center gap-[38px]">
          <Logo />
          <div className="font-[Inter] font-black text-[24px] leading-[20px] text-[#6b6865]">
            <p>WACKER</p>
            <p>NEUSON</p>
          </div>
        </div>
        <p className="text-[14px] text-center pt-2">317 / 384</p>
        <div className="text-[10px] leading-[12px] text-right pt-2">
          <p>RD45-140</p>
          <p>5100014775</p>
        </div>
      </footer>
    </div>
    <div className="w-px mt-[3px] mb-1 mr-8 bg-[repeating-linear-gradient(to_bottom,#000_0_6px,transparent_6px_10px)]" />
  </div>
);

export default function App() {
  return (
    <div className="h-screen flex flex-col overflow-hidden bg-[#fbfbfb] text-black font-['Open_Sans','Noto_Sans',sans-serif]">
      <Toolbar />
      <div className="flex-1 min-h-0 flex">
        <Rail />
        <BookmarksPanel />
        <button type="button" aria-label="Collapse bookmarks" className="w-[22px] shrink-0 bg-[#e8e8e8] flex items-center justify-center cursor-pointer">
          <svg className="w-[8px] h-[14px]" viewBox="0 0 8 14"><path d="M8 0v14L0 7z" fill="#6e6e6e" /></svg>
        </button>
        <main className="flex-1 min-w-0 flex flex-col font-['Liberation_Sans',Arial,sans-serif]">
          <Document />
          <div className="h-[20px] shrink-0 flex items-center bg-[#f0f0f0]">
            <span className="w-[143px] h-full bg-[#e0e0e0] text-center text-[14px] leading-[20px] font-['Open_Sans',sans-serif]">11,69 x 8,26 in</span>
            <div className="ml-[21px] w-[538px] h-[3px] rounded-full bg-[#808080]" />
          </div>
        </main>
        <div className="w-[20px] shrink-0 flex flex-col bg-[#f0f0f0]">
          <div className="h-[10px] bg-[#e1e1e1] border-b border-r border-[#a0a0a0]" />
          <div className="mt-[653px] mx-auto w-[3px] h-[21px] rounded-full bg-[#808080]" />
          <div className="mt-auto h-[20px] bg-[#fbfbfb]" />
        </div>
        <button type="button" aria-label="Expand tools" className="w-[22px] shrink-0 bg-[#e8e8e8] border-l border-[#c8c8c8] flex items-center justify-center cursor-pointer">
          <svg className="w-[8px] h-[14px]" viewBox="0 0 8 14"><path d="M8 0v14L0 7z" fill="#6e6e6e" /></svg>
        </button>
      </div>
      <div className="h-[7px] shrink-0 bg-[linear-gradient(to_right,#1b2129,#16222f_30%,#161c3c_42%,#2a1850_62%,#2a1b4e_80%,#1e1b2c)]" />
    </div>
  );
}
